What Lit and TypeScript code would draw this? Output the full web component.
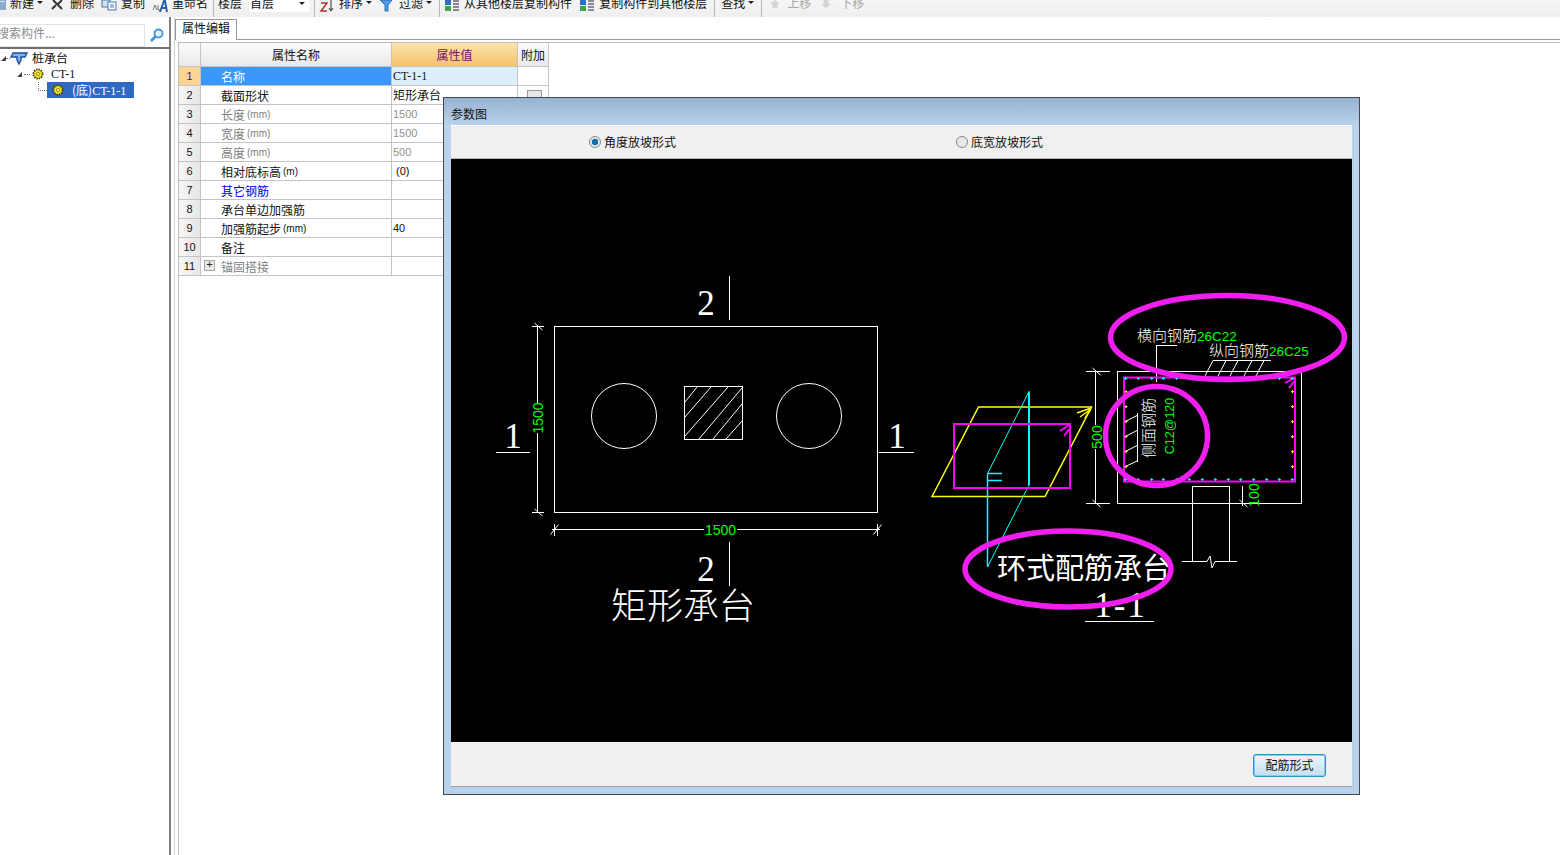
import { LitElement, html, svg, css } from 'lit';
import { customElement } from 'lit/decorators.js';
import { classMap } from 'lit/directives/class-map.js';

type Row = {
  label: string;
  unit?: string;
  value?: string;
  kind?: 'muted' | 'link';
  mutedValue?: boolean;
  selected?: boolean;
  expander?: boolean;
  dropdown?: boolean;
};

const ROWS: Row[] = [
  { label: '名称', value: 'CT-1-1', selected: true },
  { label: '截面形状', value: '矩形承台', dropdown: true },
  { label: '长度', unit: '(mm)', value: '1500', kind: 'muted', mutedValue: true },
  { label: '宽度', unit: '(mm)', value: '1500', kind: 'muted', mutedValue: true },
  { label: '高度', unit: '(mm)', value: '500', kind: 'muted', mutedValue: true },
  { label: '相对底标高', unit: '(m)', value: ' (0)' },
  { label: '其它钢筋', kind: 'link' },
  { label: '承台单边加强筋' },
  { label: '加强筋起步', unit: '(mm)', value: '40' },
  { label: '备注' },
  { label: '锚固搭接', kind: 'muted', expander: true },
];

// small toolbar glyphs, clipped by the top of the window like the reference
const icons: Record<string, unknown> = {
  doc: svg`<rect x="8" y="0" width="8" height="9" fill="#dfe9f5" stroke="#3a6ea8"/><path d="M10 3h5M10 5h5M10 7h5" stroke="#3a6ea8"/>`,
  cut: svg`<path d="M3 0l9 9M12 0L8 4M6 5L2 9" stroke="#333" stroke-width="2" fill="none"/>`,
  copy: svg`<rect x="1" y="0" width="8" height="7" fill="#cfe0f2" stroke="#4a78b0"/><rect x="7" y="2" width="8" height="8" fill="#fff" stroke="#4a78b0"/><path d="M9 5h4M9 7h4" stroke="#4a78b0"/>`,
  rename: svg`<path d="M1 10l2-5 2 5M6 5v5h2" stroke="#777" fill="none"/><path d="M8 12L12 1h1l2 11M10 8h4" stroke="#2a5fb0" stroke-width="2" fill="none"/>`,
  sort: svg`<path d="M2 3h6L2 11h6" stroke="#b03030" stroke-width="1.5" fill="none"/><path d="M12 0v10M10 8l2 3 2-3" stroke="#333" fill="none"/>`,
  filter: svg`<path d="M1 0h12L9 5v6H6V5z" fill="#4f9ce0" stroke="#2a70b8"/>`,
  stack: svg`<rect x="1" y="0" width="6" height="5" fill="#2f6fc0"/><rect x="1" y="6" width="6" height="5" fill="#3fa34a"/><path d="M9 1h6M9 4h6M9 7h6M9 10h6" stroke="#667" stroke-width="1.5"/>`,
  up: svg`<path d="M10 0l5 4h-2.5v4h-5V4H5z" fill="#d4d4d4"/>`,
  down: svg`<path d="M5.5 0h5v4H13L8 8 3 4h2.5z" fill="#d4d4d4"/>`,
};

const gear = svg`<svg class="gear" viewBox="0 0 12 12" width="12" height="12">
  <circle cx="6" cy="6" r="4.6" fill="#f5e020" stroke="#3a3a10" stroke-width="1.8" stroke-dasharray="1.4 1"/>
  <circle cx="6" cy="6" r="1.6" fill="#fff6a0" stroke="#6a6a10" stroke-width=".7"/>
</svg>`;

// the two slants CAD uses for dimension ticks
const tickUp = (x: number, y: number) => svg`<path d="M${x - 4} ${y + 5}L${x + 4} ${y - 5}"/>`;
const tickDown = (x: number, y: number) => svg`<path d="M${x - 3} ${y - 3}L${x + 5} ${y + 4}"/>`;

// the parameter drawing, in page coordinates through the viewBox
function drawing() {
  const topDots = [617, 655, 695, 730, 770, 808, 847, 886, 925, 962, 1001, 1040, 1078, 1117].map(
    (p) => 920 + p / 3,
  );
  const sideDots = [391.7, 406.7, 421.7, 436.7, 451.7, 466.7];
  return svg`
    <svg class="cad" viewBox="451 159 901 583" width="901" height="583">
      <g fill="none" stroke="#fff" shape-rendering="crispEdges">
        <rect x="554.5" y="326.5" width="323" height="186"/>
        <rect x="684.5" y="386.5" width="58" height="53"/>
        <path d="M537.5 326V403M537.5 433V512M532 326.5H544M532 512.5H544"/>
        <path d="M552 529.5H704M737 529.5H880M554.5 524V536M877.5 524V536"/>
        <path d="M729.5 276V320M729.5 542V586M496 452.5H530M879 452.5H914"/>
        <path d="M1085 621.5H1154"/>
        <rect x="1117.5" y="371.5" width="184" height="132"/>
        <path d="M1086 371.5H1110M1086 503.5H1110M1095.5 371V425M1095.5 449V503"/>
        <path d="M1192.5 486.5H1229.5M1192.5 486V561M1229.5 486V561M1242.5 486V506"/>
        <path d="M1156.5 382V345.5H1177M1213 360.5H1271M1137.5 413V462"/>
      </g>
      <g fill="none" stroke="#fff">
        <circle cx="624" cy="416" r="32.5"/>
        <circle cx="809" cy="416" r="32.5"/>
        <path d="M685 402L697 387M685 417L711 387M685 436L728 387M699 439L742 388M713 439L742 404M726 439L742 421"/>
        ${tickDown(537.5, 326)}${tickDown(537.5, 512)}${tickUp(554.5, 529.5)}${tickUp(877.5, 529.5)}
        ${tickDown(1095.5, 371)}${tickDown(1095.5, 503)}${tickDown(1242.5, 503)}
        <path d="M1213 360.5L1205 376M1226 360.5L1218 376M1238 360.5L1230 376M1252 360.5L1244 376M1264 360.5L1256 376"/>
        <path d="M1125 421.7L1137 415.5M1125 436.7L1137 430.5M1125 451.7L1137 445.5M1125 466.7L1137 461"/>
        <path d="M1182 561.5H1207L1210 556L1212 568L1215 561.5H1237"/>
      </g>

      <path d="M932 496.5L978.5 407H1091.5L1045 496.5Z" fill="none" stroke="#ff0" stroke-width="1.5"/>
      <path d="M1077 413L1091 408M1080 417L1091 409M1085 418L1091 409" fill="none" stroke="#ff0" stroke-width="1.5"/>
      <path d="M1029 391.5V485" stroke="#0ff" stroke-width="2" fill="none"/>
      <path d="M1029 391.5L987.5 473.5M1029 485L987.5 567" stroke="#0ff" fill="none"/>
      <path d="M987.5 473.5V567M988 473.5H1002M988 480.5H1002" stroke="#0ff" stroke-width="1.5" fill="none"/>
      <g fill="none" stroke="#f0f" stroke-width="2">
        <rect x="954" y="424" width="116" height="64"/>
        <path d="M1060 431L1069 425M1064 436L1070 428"/>
        <rect x="1124" y="377.5" width="171" height="104"/>
        <path d="M1285 383L1294 378M1289 388L1295 380"/>
      </g>
      ${topDots.map(
        (x) => svg`<path d="M${x - 1.5} 378.5h3M${x} 377v3M${x - 1.5} 479.5h3M${x} 478v3" stroke="#0ff"/>`,
      )}
      ${sideDots.map(
        (y) => svg`<path d="M1124.5 ${y}h3M1126 ${y - 1.5}v3M1291 ${y}h3M1292.5 ${y - 1.5}v3" stroke="#ff0"/>`,
      )}

      <g class="serif" fill="#fff">
        <text x="706" y="315" text-anchor="middle">2</text>
        <text x="706" y="581" text-anchor="middle">2</text>
        <text x="513" y="448" text-anchor="middle">1</text>
        <text x="897" y="448" text-anchor="middle">1</text>
        <text class="t-section" x="1120.5" y="617" text-anchor="middle">1-1</text>
      </g>
      <g class="cjk" fill="#fff">
        <text class="t-title" x="611" y="619">矩形承台</text>
        <text class="t-ring" x="997" y="579">环式配筋承台</text>
        <text class="t-label" x="1137" y="341">横向钢筋</text>
        <text class="t-label" x="1209" y="356">纵向钢筋</text>
        <text class="t-label" transform="translate(1154 428) rotate(-90)" text-anchor="middle">侧面钢筋</text>
      </g>
      <g class="dim" fill="#0f0">
        <text transform="translate(543 418) rotate(-90)" text-anchor="middle">1500</text>
        <text x="720.5" y="535" text-anchor="middle">1500</text>
        <text transform="translate(1102 437) rotate(-90)" text-anchor="middle">500</text>
        <text transform="translate(1259 495) rotate(-90)" text-anchor="middle">100</text>
        <text class="t-rebar" x="1197" y="341">26C22</text>
        <text class="t-rebar" x="1269" y="356">26C25</text>
        <text class="t-side" transform="translate(1174 426) rotate(-90)" text-anchor="middle">C12@120</text>
      </g>

      <g fill="none" stroke="#f01ff0" stroke-width="5.5">
        <ellipse cx="1227.5" cy="337.5" rx="117" ry="42"/>
        <ellipse cx="1156.5" cy="436" rx="51" ry="49.5"/>
        <ellipse cx="1068" cy="569" rx="103" ry="38"/>
      </g>
    </svg>`;
}

@customElement('prop-table')
export class PropTable extends LitElement {
  static styles = css`
    :host {
      display: grid;
      grid-template-columns: 22px 191px 126px 31px;
      grid-auto-rows: 19px;
      grid-template-rows: 24px;
      width: 370px;
      font: 12px/18px 'Noto Sans CJK SC', sans-serif;
      color: #111;
    }
    .c {
      box-sizing: border-box;
      border-right: 1px solid #c4c4c4;
      border-bottom: 1px solid #c4c4c4;
      white-space: pre;
      overflow: hidden;
    }
    .head {
      background: linear-gradient(#fbfbfb, #e9e9e9);
      text-align: center;
      line-height: 24px;
    }
    .head.on {
      background: linear-gradient(#fde3ac, #f5c36b);
      color: #7a0a7a;
    }
    .num {
      background: linear-gradient(90deg, #f8f8f8, #e6e6e6);
      text-align: center;
      font: 11px/18px 'Liberation Sans', sans-serif;
    }
    .num.on {
      background: #fbd596;
      color: #5a1060;
    }
    .name {
      display: flex;
      align-items: center;
      padding: 1px 0 0 20px;
      position: relative;
    }
    .name.sel {
      background: #3a98fc;
      color: #fff;
    }
    .name.muted {
      color: #808080;
    }
    .name.link {
      color: #0000f0;
    }
    .unit {
      font: 10px/18px 'Liberation Sans', sans-serif;
      margin-left: 2px;
    }
    .plus {
      position: absolute;
      left: 3px;
      top: 3px;
      width: 11px;
      height: 11px;
      box-sizing: border-box;
      border: 1px solid #aaa;
      background: #e8e8e8;
      color: #222;
      font: 11px/9px 'Liberation Mono', monospace;
      text-align: center;
    }
    .val {
      padding-left: 1px;
      font-size: 12px;
    }
    .val.sel {
      background: #deeefc;
    }
    .val.lat {
      font: 11px/18px 'Liberation Sans', sans-serif;
    }
    .val.code {
      font: 12px/18px 'Liberation Serif', serif;
    }
    .val.off {
      color: #909090;
    }
    .extra {
      position: relative;
    }
    .drop {
      position: absolute;
      left: 9px;
      top: 4px;
      width: 13px;
      height: 9px;
      border: 1px solid #999;
      background: #e8e8e8;
    }
  `;

  render() {
    return html`
      <div class="c head"></div>
      <div class="c head">属性名称</div>
      <div class="c head on">属性值</div>
      <div class="c head">附加</div>
      ${ROWS.map((r, i) => {
        const cjkValue = r.value === '矩形承台';
        return html`
          <div class="c num ${r.selected ? 'on' : ''}">${i + 1}</div>
          <div
            class="c name ${classMap({
              sel: !!r.selected,
              muted: r.kind === 'muted',
              link: r.kind === 'link',
            })}"
          >
            ${r.expander ? html`<span class="plus">+</span>` : ''}
            <span>${r.label}</span>${r.unit ? html`<span class="unit">${r.unit}</span>` : ''}
          </div>
          <div
            class="c val ${classMap({
              sel: !!r.selected,
              lat: !cjkValue,
              code: r.value === 'CT-1-1',
              off: !!r.mutedValue,
            })}"
          >${r.value ?? ''}</div>
          <div class="c extra">${r.dropdown ? html`<span class="drop"></span>` : ''}</div>
        `;
      })}
    `;
  }
}

@customElement('app-root')
export class AppRoot extends LitElement {
  static styles = css`
    :host {
      display: block;
      position: relative;
      width: 1560px;
      height: 855px;
      overflow: hidden;
      background: #fff;
      font: 12px/16px 'Noto Sans CJK SC', sans-serif;
      color: #111;
    }

    /* toolbar */
    .toolbar {
      display: flex;
      gap: 7px;
      height: 17px;
      overflow: hidden;
      background: linear-gradient(#f5f5f5, #efefef);
    }
    .tb {
      display: flex;
      align-items: flex-start;
      gap: 4px;
      margin-top: -5px;
      flex: none;
      height: 22px;
    }
    .tb.first {
      margin-left: -10px;
    }
    .tb svg {
      margin-top: 5px;
      flex: none;
    }
    .tb.dis {
      color: #a8a8a8;
      gap: 6px;
    }
    .caret {
      width: 0;
      height: 0;
      border: 3px solid transparent;
      border-top-color: #222;
      border-bottom: 0;
      margin: 6px 0 0 -1px;
    }
    .combo {
      display: flex;
      justify-content: space-between;
      width: 60px;
      height: 17px;
      margin-top: -5px;
      background: #fff;
      padding: 0 4px 0 1px;
      box-sizing: border-box;
      flex: none;
    }
    .combo i {
      width: 0;
      height: 0;
      border: 3px solid transparent;
      border-top-color: #222;
      border-bottom: 0;
      margin-top: 7px;
    }
    .sep {
      width: 1px;
      background: #b8b8b8;
      margin: 0 -3px 0 -2px;
      flex: none;
    }
    .sep.a {
      margin: 0 -3px 0 0;
    }
    .sep.b {
      margin: 0 -1px 0 0;
    }
    .sep.c {
      margin: 0 -4px 0 0;
    }

    /* panes */
    .main {
      display: flex;
      height: 838px;
    }
    .left {
      width: 169px;
      flex: none;
      border-right: 2px solid #808080;
    }
    .search {
      display: flex;
      align-items: center;
      height: 24px;
      margin-top: 6px;
      border-bottom: 2px solid #707070;
    }
    .search-box {
      box-sizing: border-box;
      width: 145px;
      height: 23px;
      border: 1px solid #e2e2e2;
      border-left: 0;
      color: #8c8c8c;
      line-height: 16px;
      white-space: nowrap;
      overflow: hidden;
      text-indent: -3px;
    }
    .search svg {
      margin-left: 4px;
    }
    .node {
      display: flex;
      align-items: center;
      height: 16px;
      white-space: nowrap;
    }
    .node .lat {
      font: 12px/16px 'Liberation Serif', serif;
    }
    .n1 {
      padding-left: 1px;
      margin-top: 1px;
    }
    .n1 svg {
      margin-right: 4px;
    }
    .n2 {
      padding-left: 17px;
    }
    .n2 .gear {
      margin: 0 7px 0 2px;
    }
    .n3 {
      padding-left: 38px;
    }
    .arrow {
      width: 0;
      height: 0;
      border-style: solid;
      border-width: 0 0 5px 5px;
      border-color: transparent transparent #444 transparent;
      flex: none;
    }
    .dots {
      width: 4px;
      border-top: 1px dotted #777;
      flex: none;
    }
    .n2 .dots {
      width: 6px;
      margin-left: 2px;
    }
    .elbow {
      width: 8px;
      height: 8px;
      margin-top: -8px;
      border-left: 1px dotted #777;
      border-bottom: 1px dotted #777;
      flex: none;
    }
    .picked {
      display: flex;
      align-items: center;
      gap: 8px;
      background: #3168c4;
      color: #fff;
      width: 87px;
      height: 16px;
      padding-left: 5px;
      box-sizing: border-box;
    }
    .right {
      flex: 1;
      border-left: 1px solid #d0d0d0;
      margin-left: 3px;
    }
    .tabs {
      height: 20px;
      margin-top: 2px;
      border-bottom: 1px solid #9a9a9a;
    }
    .tab {
      display: inline-block;
      box-sizing: border-box;
      width: 62px;
      height: 21px;
      padding-left: 6px;
      border: 1px solid #9a9a9a;
      border-bottom: 0;
      background: #fff;
      line-height: 16px;
    }
    .grid-wrap {
      margin: 2px 0 0 3px;
      height: 820px;
      border-left: 1px solid #bdbdbd;
      border-top: 1px solid #bdbdbd;
    }

    /* dialog window */
    .dialog {
      position: absolute;
      left: 443px;
      top: 97px;
      width: 917px;
      height: 698px;
      box-sizing: border-box;
      border: 1px solid #3f4a55;
      padding: 0 7px 7px;
      background: linear-gradient(#97b2d0 0, #bad2ec 28px, #b9d2ec 100%);
      display: flex;
      flex-direction: column;
    }
    .title {
      height: 27px;
      line-height: 32px;
      flex: none;
    }
    .body {
      flex: 1;
      display: flex;
      flex-direction: column;
      background: #f0f0f0;
      border-bottom: 1px solid #a0a0a0;
      border-top: 1px solid #fff;
    }
    .band {
      display: grid;
      grid-template-columns: 367px 1fr;
      align-items: center;
      height: 32px;
      padding-left: 138px;
      border-bottom: 1px solid #b8b8b8;
      flex: none;
    }
    .radio {
      display: flex;
      align-items: center;
      gap: 3px;
    }
    .dot {
      width: 12px;
      height: 12px;
      box-sizing: border-box;
      border-radius: 50%;
      border: 1px solid #8a8a8a;
      background: #e8e8e8;
    }
    .dot.on {
      background: radial-gradient(circle, #0f6fb8 0 3px, #e4e4e4 3.5px);
    }
    .canvas {
      flex: none;
      height: 583px;
      background: #000;
    }
    .cad {
      display: block;
    }
    .cad .serif {
      font: 35px 'Liberation Serif', serif;
    }
    .cad .t-section {
      letter-spacing: 2px;
    }
    .cad .cjk {
      font-family: 'Noto Sans CJK SC', sans-serif;
      font-weight: 300;
    }
    .cad .t-title {
      font-size: 36px;
    }
    .cad .t-ring {
      font-size: 29px;
      font-weight: 400;
    }
    .cad .t-label {
      font-size: 15px;
    }
    .cad .dim {
      font: 14px 'Liberation Sans', sans-serif;
    }
    .cad .t-rebar {
      font-size: 13.5px;
    }
    .cad .t-side {
      font-size: 12.5px;
    }
    .foot {
      flex: 1;
      display: flex;
      justify-content: flex-end;
      padding: 12px 26px 0 0;
    }
    .btn {
      box-sizing: border-box;
      width: 73px;
      height: 23px;
      border: 1px solid #2a90cc;
      border-radius: 3px;
      background: linear-gradient(#eef6fb, #c4deee);
      box-shadow: inset 0 0 0 1px #8fcaec;
      text-align: center;
      line-height: 20px;
    }
  `;

  private tool(label: string, icon: string, caret = false, cls = '') {
    return html`
      <div class="tb ${cls}">
        <svg width="16" height="14" viewBox="0 0 16 14">${icons[icon]}</svg>
        <span>${label}</span>${caret ? html`<i class="caret"></i>` : ''}
      </div>
    `;
  }

  render() {
    return html`
      <div class="toolbar">
        ${this.tool('新建', 'doc', true, 'first')}
        ${this.tool('删除', 'cut')}
        ${this.tool('复制', 'copy')}
        ${this.tool('重命名', 'rename')}
        <div class="sep"></div>
        <div class="tb"><span>楼层</span></div>
        <div class="combo"><span>首层</span><i></i></div>
        <div class="sep"></div>
        ${this.tool('排序', 'sort', true)}
        ${this.tool('过滤', 'filter', true)}
        <div class="sep a"></div>
        ${this.tool('从其他楼层复制构件', 'stack')}
        ${this.tool('复制构件到其他楼层', 'stack')}
        <div class="sep b"></div>
        <div class="tb"><span>查找</span><i class="caret"></i></div>
        <div class="sep c"></div>
        ${this.tool('上移', 'up', false, 'dis')}
        ${this.tool('下移', 'down', false, 'dis')}
      </div>

      <div class="main">
        <div class="left">
          <div class="search">
            <div class="search-box">搜索构件...</div>
            <svg width="16" height="16" viewBox="0 0 16 16">
              <circle cx="9.5" cy="6.5" r="4" fill="#e4f1fb" stroke="#4a9ad8" stroke-width="2" />
              <path d="M6.5 9.5L2 14" stroke="#3f8fd0" stroke-width="2.5" />
            </svg>
          </div>
          <div class="tree">
            <div class="node n1">
              <i class="arrow"></i><i class="dots"></i>
              <svg width="18" height="15" viewBox="0 0 18 15">
                <path
                  d="M3 2H17L15 6H11V9L9 13L7 9V6H1Z"
                  fill="#7fb2e6"
                  stroke="#1f4f9a"
                  stroke-width="1.4"
                />
              </svg>
              <span>桩承台</span>
            </div>
            <div class="node n2">
              <i class="arrow"></i><i class="dots"></i>${gear}<span class="lat">CT-1</span>
            </div>
            <div class="node n3">
              <i class="elbow"></i>
              <div class="picked">${gear}<span>(底)<span class="lat">CT-1-1</span></span></div>
            </div>
          </div>
        </div>

        <div class="right">
          <div class="tabs"><span class="tab">属性编辑</span></div>
          <div class="grid-wrap"><prop-table></prop-table></div>
        </div>
      </div>

      <div class="dialog">
        <div class="title">参数图</div>
        <div class="body">
          <div class="band">
            <label class="radio"><i class="dot on"></i>角度放坡形式</label>
            <label class="radio"><i class="dot"></i>底宽放坡形式</label>
          </div>
          <div class="canvas">${drawing()}</div>
          <div class="foot"><div class="btn">配筋形式</div></div>
        </div>
      </div>
    `;
  }
}
